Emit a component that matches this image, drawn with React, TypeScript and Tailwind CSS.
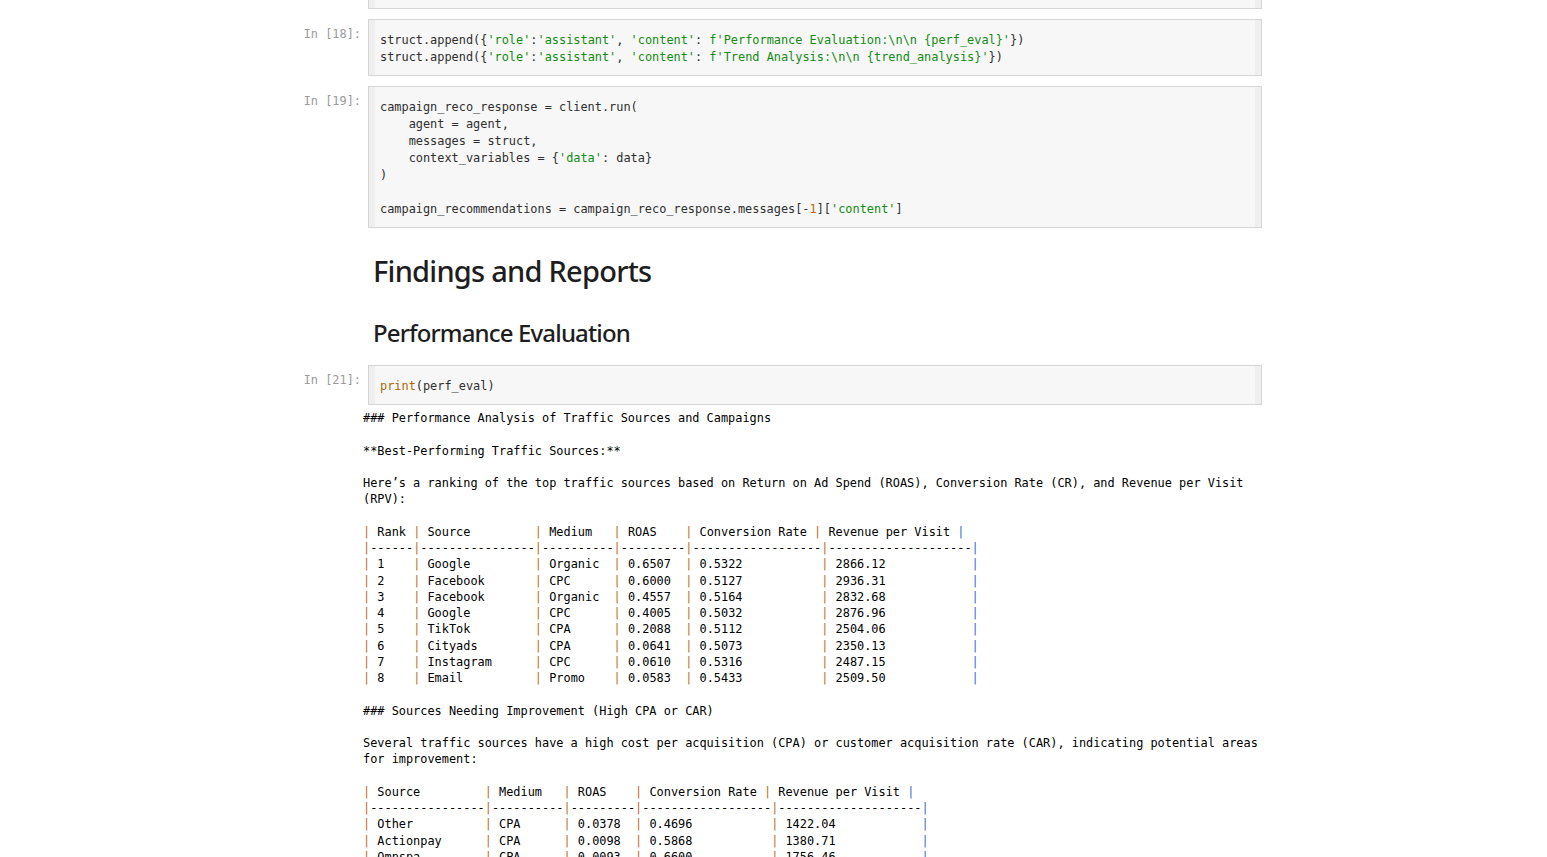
const MONO = "font-['DejaVu_Sans_Mono',monospace] text-[11.9px]";
const GREEN = "text-[#138a13]";
const GOLD = "text-[#a8690c]";

type Seg = [string, string?];

const cell18: Seg[][] = [
  [["struct.append({"], ["'role'", GREEN], [":"], ["'assistant'", GREEN], [", "], ["'content'", GREEN], [": "], ["f'Performance Evaluation:\\n\\n {perf_eval}'", GREEN], ["})"]],
  [["struct.append({"], ["'role'", GREEN], [":"], ["'assistant'", GREEN], [", "], ["'content'", GREEN], [": "], ["f'Trend Analysis:\\n\\n {trend_analysis}'", GREEN], ["})"]],
];

const cell19: Seg[][] = [
  [["campaign_reco_response = client.run("]],
  [["    agent = agent,"]],
  [["    messages = struct,"]],
  [["    context_variables = {"], ["'data'", GREEN], [": data}"]],
  [[")"]],
  [[""]],
  [["campaign_recommendations = campaign_reco_response.messages[-"], ["1", "text-[#c0620a]"], ["]["], ["'content'", GREEN], ["]"]],
];

const cell21: Seg[][] = [[["print", GOLD], ["(perf_eval)"]]];

const top = [
  ["1", "Google", "Organic", "0.6507", "0.5322", "2866.12"],
  ["2", "Facebook", "CPC", "0.6000", "0.5127", "2936.31"],
  ["3", "Facebook", "Organic", "0.4557", "0.5164", "2832.68"],
  ["4", "Google", "CPC", "0.4005", "0.5032", "2876.96"],
  ["5", "TikTok", "CPA", "0.2088", "0.5112", "2504.06"],
  ["6", "Cityads", "CPA", "0.0641", "0.5073", "2350.13"],
  ["7", "Instagram", "CPC", "0.0610", "0.5316", "2487.15"],
  ["8", "Email", "Promo", "0.0583", "0.5433", "2509.50"],
];

const weak = [
  ["Other", "CPA", "0.0378", "0.4696", "1422.04"],
  ["Actionpay", "CPA", "0.0098", "0.5868", "1380.71"],
  ["Omnspa", "CPA", "0.0093", "0.6600", "1756.46"],
  ["Admitad", "CPA", "0.0087", "0.5541", "1689.20"],
];

const dash = (n: number) => "-".repeat(n);

const output: string[] = [
  "### Performance Analysis of Traffic Sources and Campaigns",
  "",
  "**Best-Performing Traffic Sources:**",
  "",
  "Here’s a ranking of the top traffic sources based on Return on Ad Spend (ROAS), Conversion Rate (CR), and Revenue per Visit",
  "(RPV):",
  "",
  "| " + "Rank".padEnd(5) + "| " + "Source".padEnd(15) + "| " + "Medium".padEnd(9) + "| " + "ROAS".padEnd(8) + "| Conversion Rate | Revenue per Visit |",
  "|" + dash(6) + "|" + dash(16) + "|" + dash(10) + "|" + dash(9) + "|" + dash(18) + "|" + dash(20) + "|",
  ...top.map(
    (r) =>
      "| " + r[0].padEnd(5) + "| " + r[1].padEnd(15) + "| " + r[2].padEnd(9) + "| " + r[3].padEnd(8) + "| " + r[4].padEnd(17) + "| " + r[5].padEnd(19) + "|"
  ),
  "",
  "### Sources Needing Improvement (High CPA or CAR)",
  "",
  "Several traffic sources have a high cost per acquisition (CPA) or customer acquisition rate (CAR), indicating potential areas",
  "for improvement:",
  "",
  "| " + "Source".padEnd(15) + "| " + "Medium".padEnd(9) + "| " + "ROAS".padEnd(8) + "| Conversion Rate | Revenue per Visit |",
  "|" + dash(16) + "|" + dash(10) + "|" + dash(9) + "|" + dash(18) + "|" + dash(20) + "|",
  ...weak.map(
    (r) => "| " + r[0].padEnd(15) + "| " + r[1].padEnd(9) + "| " + r[2].padEnd(8) + "| " + r[3].padEnd(17) + "| " + r[4].padEnd(19) + "|"
  ),
];

function OutLine({ text }: { text: string }) {
  // pipes come out tinted in the screenshot (subpixel AA), last one bluish
  const last = text.lastIndexOf("|");
  const parts: JSX.Element[] = [];
  let buf = "";
  for (let i = 0; i < text.length; i++) {
    const ch = text[i];
    if (ch === "|") {
      if (buf) parts.push(<span key={"t" + i}>{buf}</span>);
      buf = "";
      parts.push(
        <span key={"p" + i} className={i === last ? "text-[#3a6cd4]" : "text-[#c0701f]"}>
          |
        </span>
      );
    } else {
      buf += ch;
    }
  }
  if (buf) parts.push(<span key="end">{buf}</span>);
  return <div className="h-[16.25px] leading-[16.25px] whitespace-pre">{parts.length ? parts : " "}</div>;
}

function CodeBox({ lines }: { lines: Seg[][] }) {
  return (
    <div className="flex flex-1 border border-[#d5d5d5] bg-[#f7f7f7]">
      <div className="w-[6px] bg-[#efefef]" />
      <div className={`flex-1 pl-[5px] pt-[12px] pb-[9px] text-[#2e2e2e] ${MONO}`}>
        {lines.map((segs, i) => (
          <div key={i} className="h-[17px] leading-[17px] whitespace-pre">
            {segs.map(([t, c], j) => (
              <span key={j} className={c}>
                {t}
              </span>
            ))}
          </div>
        ))}
      </div>
      <div className="w-[6px] bg-[#efefef]" />
    </div>
  );
}

function CodeCell({ n, lines }: { n: number; lines: Seg[][] }) {
  return (
    <div className="flex">
      <div className={`w-[70px] shrink-0 pr-[7px] pt-[7px] text-right leading-[16px] text-[#9a9a9a] ${MONO}`}>In [{n}]:</div>
      <CodeBox lines={lines} />
    </div>
  );
}

export default function App() {
  return (
    <div className="h-[857px] overflow-hidden bg-white">
      <div className="ml-[298px] w-[964px]">
        <div className="flex">
          <div className="w-[70px] shrink-0" />
          <div className="flex h-[9px] flex-1 border-x border-b border-[#d5d5d5] bg-[#f7f7f7]">
            <div className="w-[6px] bg-[#efefef]" />
            <div className="flex-1" />
            <div className="w-[6px] bg-[#efefef]" />
          </div>
        </div>

        <div className="mt-[10px] flex flex-col gap-[10px]">
          <CodeCell n={18} lines={cell18} />
          <CodeCell n={19} lines={cell19} />
        </div>

        <div className="pl-[75px] font-['Noto_Sans',sans-serif] text-[#1e1e1e]">
          <h1 className="mt-[25px] h-[36px] text-[29px] leading-[36px] font-medium tracking-[-0.75px]">Findings and Reports</h1>
          <h2 className="mt-[29px] h-[30px] text-[24px] leading-[30px] font-medium tracking-[-0.85px]">Performance Evaluation</h2>
        </div>

        <div className="mt-[17px]">
          <CodeCell n={21} lines={cell21} />
        </div>

        <div className={`ml-[65px] mt-[5px] text-black ${MONO}`}>
          {output.map((l, i) => (
            <OutLine key={i} text={l} />
          ))}
        </div>
      </div>
    </div>
  );
}
